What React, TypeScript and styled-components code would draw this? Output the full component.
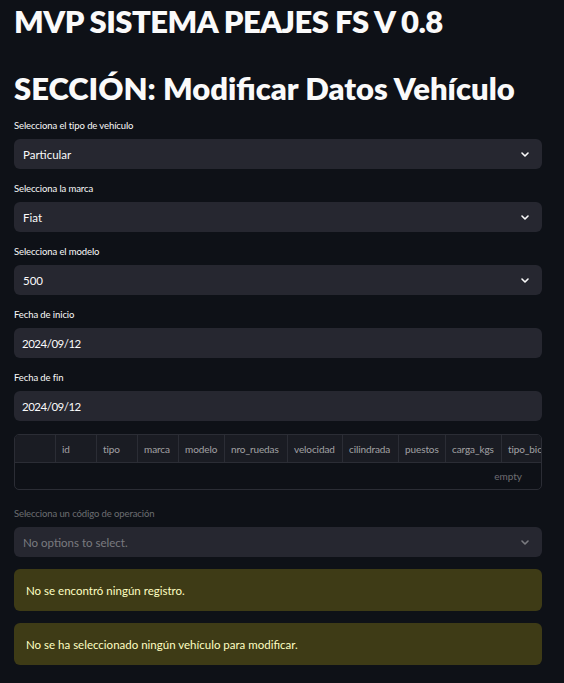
import React from "react";
import styled, { createGlobalStyle } from "styled-components";

const Global = createGlobalStyle`
  html, body { margin: 0; padding: 0; background: #0e1117; }
  body { font-family: Lato, "Open Sans", sans-serif; color: #fafafa; }
`;

const Page = styled.div`
  padding: 0 22px 0 14px;
  display: flex;
  flex-direction: column;
`;

const Title = styled.h1<{ $top: number; $bottom: number; $ls: number }>`
  margin: 0;
  font-size: 31px;
  font-weight: 800;
  line-height: 40px;
  letter-spacing: ${(p) => p.$ls}px;
  color: #fafafa;
  padding: ${(p) => `${p.$top}px 0 ${p.$bottom}px`};
`;

const Stack = styled.div`
  display: flex;
  flex-direction: column;
  gap: 12px;
`;

const Field = styled.div`
  display: flex;
  flex-direction: column;
`;

const Label = styled.label<{ $disabled?: boolean }>`
  font-size: 9.5px;
  letter-spacing: -0.1px;
  line-height: 16px;
  margin-bottom: 5px;
  color: ${(p) => (p.$disabled ? "rgba(250,250,250,0.4)" : "#fafafa")};
`;

const Box = styled.div<{ $disabled?: boolean; $padLeft: number; $ls?: number }>`
  height: 30px;
  box-sizing: border-box;
  background: #262730;
  border-radius: 6px;
  display: flex;
  align-items: center;
  justify-content: space-between;
  padding: 0 13px 0 ${(p) => p.$padLeft}px;
  font-size: 11.5px;
  letter-spacing: ${(p) => p.$ls ?? 0}px;
  color: ${(p) => (p.$disabled ? "rgba(250,250,250,0.4)" : "#fafafa")};
`;

const Chevron = ({ dim }: { dim?: boolean }) => (
  <svg width="8" height="5" viewBox="0 0 8 5" fill="none">
    <polyline
      points="1,1 4,4 7,1"
      stroke={dim ? "rgba(250,250,250,0.4)" : "#fafafa"}
      strokeWidth="1.6"
      strokeLinecap="round"
      strokeLinejoin="round"
    />
  </svg>
);

const TableWrap = styled.div`
  margin: 1px 0 4px;
  border: 1px solid #2b2d35;
  border-radius: 5px;
  overflow: hidden;
`;

const HeadRow = styled.div`
  display: flex;
  height: 27px;
  background: #1a1c23;
  border-bottom: 1px solid #2b2d35;
  white-space: nowrap;
  overflow: hidden;
`;

const HeadCell = styled.div<{ $w: number }>`
  flex: 0 0 ${(p) => p.$w}px;
  box-sizing: border-box;
  border-right: 1px solid #2b2d35;
  padding-left: 6px;
  display: flex;
  align-items: center;
  font-size: 10px;
  letter-spacing: -0.1px;
  color: rgba(250,250,250,0.6);
  overflow: hidden;
`;

const EmptyRow = styled.div`
  height: 26px;
  display: flex;
  align-items: center;
  justify-content: flex-end;
  padding-right: 19px;
  font-size: 10px;
  color: rgba(250,250,250,0.4);
`;

const Alert = styled.div`
  height: 42px;
  box-sizing: border-box;
  background: #3e3b16;
  border-radius: 6px;
  padding: 0 12px;
  display: flex;
  align-items: center;
  font-size: 11.5px;
  color: #ffffc2;
`;

const cols: [string, number][] = [
  ["", 41],
  ["id", 41],
  ["tipo", 41],
  ["marca", 41],
  ["modelo", 46],
  ["nro_ruedas", 63],
  ["velocidad", 55],
  ["cilindrada", 56],
  ["puestos", 47],
  ["carga_kgs", 56],
  ["tipo_bici", 60],
];

export default function App() {
  return (
    <>
      <Global />
      <Page>
        <Title $top={1} $bottom={6} $ls={-0.55}>MVP SISTEMA PEAJES FS V 0.8</Title>
        <Title $top={21} $bottom={10} $ls={0}>SECCIÓN: Modificar Datos Vehículo</Title>
        <Stack>
          <Field>
            <Label>Selecciona el tipo de vehículo</Label>
            <Box $padLeft={9}>Particular<Chevron /></Box>
          </Field>
          <Field>
            <Label>Selecciona la marca</Label>
            <Box $padLeft={9}>Fiat<Chevron /></Box>
          </Field>
          <Field>
            <Label>Selecciona el modelo</Label>
            <Box $padLeft={9}>500<Chevron /></Box>
          </Field>
          <Field>
            <Label>Fecha de inicio</Label>
            <Box $padLeft={8} $ls={-0.5}>2024/09/12</Box>
          </Field>
          <Field>
            <Label>Fecha de fin</Label>
            <Box $padLeft={8} $ls={-0.5}>2024/09/12</Box>
          </Field>
          <TableWrap>
            <HeadRow>
              {cols.map(([n, w], i) => (
                <HeadCell key={i} $w={w}>{n}</HeadCell>
              ))}
            </HeadRow>
            <EmptyRow>empty</EmptyRow>
          </TableWrap>
          <Field>
            <Label $disabled>Selecciona un código de operación</Label>
            <Box $disabled $padLeft={9}>No options to select.<Chevron dim /></Box>
          </Field>
          <Alert>No se encontró ningún registro.</Alert>
          <Alert>No se ha seleccionado ningún vehículo para modificar.</Alert>
        </Stack>
      </Page>
    </>
  );
}
